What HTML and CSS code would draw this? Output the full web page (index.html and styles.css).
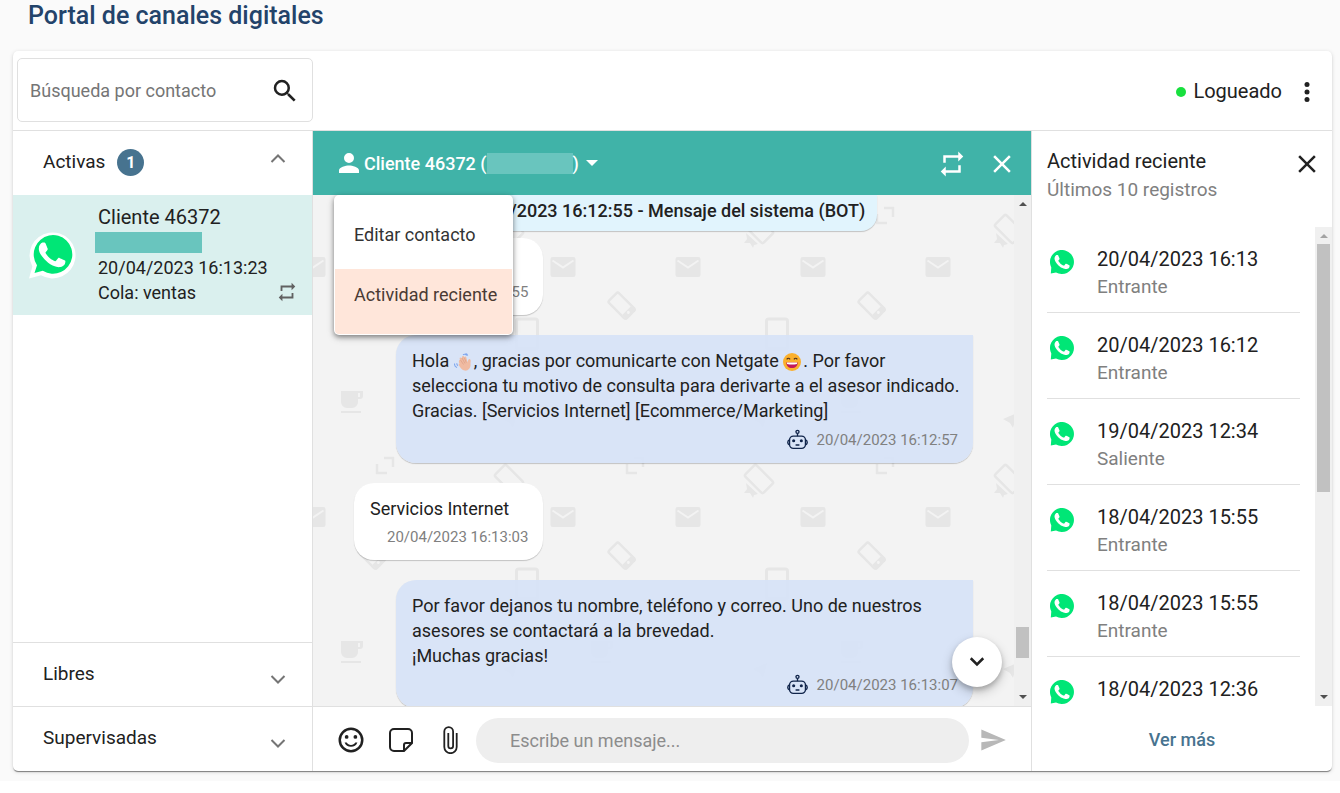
FILE: index.html
```html
<!DOCTYPE html>
<html lang="es">
<head>
<meta charset="utf-8">
<title>Portal de canales digitales</title>
<link rel="stylesheet" href="styles.css">
</head>
<body>
<svg class="defs" width="0" height="0" aria-hidden="true">
  <defs>
    <symbol id="i-search" viewBox="0 0 24 24"><path d="M15.5 14h-.79l-.28-.27A6.47 6.47 0 0 0 16 9.5 6.5 6.5 0 1 0 9.5 16c1.61 0 3.09-.59 4.23-1.57l.27.28v.79l5 4.99L20.49 19zm-6 0a4.5 4.5 0 1 1 0-9 4.5 4.5 0 0 1 0 9z"/></symbol>
    <symbol id="i-dots" viewBox="0 0 24 24"><circle cx="12" cy="6" r="2"/><circle cx="12" cy="12" r="2"/><circle cx="12" cy="18" r="2"/></symbol>
    <symbol id="i-close" viewBox="0 0 24 24"><path d="M19 6.41 17.59 5 12 10.59 6.41 5 5 6.41 10.59 12 5 17.59 6.41 19 12 13.41 17.59 19 19 17.59 13.41 12z"/></symbol>
    <symbol id="i-repeat" viewBox="0 0 24 24"><path d="M7 7h10v3l4-4-4-4v3H5v6h2zm10 10H7v-3l-4 4 4 4v-3h12v-6h-2z"/></symbol>
    <symbol id="i-person" viewBox="0 0 24 24"><path d="M12 12a4 4 0 1 0 0-8 4 4 0 0 0 0 8zm0 2c-2.67 0-8 1.34-8 4v2h16v-2c0-2.66-5.33-4-8-4z"/></symbol>
    <symbol id="i-down" viewBox="0 0 24 24"><path d="m7 9 5 5 5-5" fill="none" stroke="currentColor" stroke-width="2"/></symbol>
    <symbol id="i-down-thin" viewBox="0 0 26 26"><path d="m6.500 10 6.500 6.500 6.500-6.500" fill="none" stroke="currentColor" stroke-width="2"/></symbol>
    <symbol id="i-smile" viewBox="0 0 24 24"><circle cx="12" cy="12" r="9" fill="none" stroke="currentColor" stroke-width="2"/><circle cx="8.5" cy="9.5" r="1.5"/><circle cx="15.5" cy="9.5" r="1.5"/><path d="M12 16c-1.48 0-2.75-.81-3.450-2H6.880a5.500 5.500 0 0 0 10.240 0h-1.670c-.69 1.190-1.970 2-3.450 2z"/></symbol>
    <symbol id="i-sticker" viewBox="0 0 24 24"><path d="M5 1h14a4 4 0 0 1 4 4v10l-8 8H5a4 4 0 0 1-4-4V5a4 4 0 0 1 4-4zM15 22.500V17a2 2 0 0 1 2-2h5.500" fill="none" stroke="currentColor" stroke-width="2"/></symbol>
    <symbol id="i-clip" viewBox="0 0 16 28"><path d="M14.200 7v14a6.200 6.200 0 0 1-12.400 0V5.500a4.300 4.300 0 0 1 8.800 0v14.500a2.400 2.400 0 0 1-4.800 0V7" fill="none" stroke="currentColor" stroke-width="1.800"/></symbol>
    <symbol id="i-send" viewBox="0 0 24 24"><path d="M2.010 21 23 12 2.010 3 2 10l15 2-15 2z"/></symbol>
    <symbol id="i-handset" viewBox="0 0 24 24"><path d="M17.472 14.382c-.297-.149-1.758-.867-2.030-.967-.273-.099-.471-.148-.67.15-.197.297-.767.966-.94 1.164-.173.199-.347.223-.644.075-.297-.15-1.255-.463-2.390-1.475-.883-.788-1.480-1.761-1.653-2.059-.173-.297-.018-.458.13-.606.134-.133.298-.347.446-.52.149-.174.198-.298.298-.497.099-.198.05-.371-.025-.52-.075-.149-.669-1.612-.916-2.207-.242-.579-.487-.5-.669-.51-.173-.008-.371-.01-.57-.01-.198 0-.52.074-.792.372-.272.297-1.040 1.016-1.040 2.479 0 1.462 1.065 2.875 1.213 3.074.149.198 2.096 3.200 5.077 4.487.709.306 1.262.489 1.694.625.712.227 1.360.195 1.871.118.571-.085 1.758-.719 2.006-1.413.248-.694.248-1.289.173-1.413-.074-.124-.272-.198-.57-.347z"/></symbol>
    <symbol id="i-wa-ring" viewBox="0 0 48 48">
      <path d="M0 47.500 3.400 35.500A23 23 0 1 1 12 44.300z" fill="#fff"/>
      <path d="M5.500 42 8 34.200A19.300 19.300 0 1 1 13.800 39.800z" fill="#00e676"/>
      <g transform="translate(-3.400 -2.600) scale(2.200)"><use href="#i-handset" width="24" height="24" fill="#fff"/></g>
    </symbol>
    <symbol id="i-wa" viewBox="0 0 24 24">
      <path d="M.8 23.500 1.300 17.500A12 12 0 1 1 6 22.400z" fill="#00e676"/>
      <g transform="translate(-3 -3) scale(1.250)"><use href="#i-handset" width="24" height="24" fill="#fff"/></g>
    </symbol>
    <symbol id="i-robot" viewBox="0 0 24 21">
      <g fill="none" stroke="#10244a" stroke-width="1.400"><circle cx="12" cy="2.500" r="1.600"/><path d="M12 4.200V7"/><rect x="3.700" y="7" width="16.600" height="12.800" rx="4"/><path d="M3.500 11A2.700 2.700 0 0 0 3.500 16M20.500 11a2.700 2.700 0 0 1 0 5M10 16.200h4"/></g>
      <circle cx="8" cy="11.800" r="1.600" fill="#10244a"/><circle cx="16" cy="11.800" r="1.600" fill="#10244a"/>
    </symbol>
    <symbol id="e-wave" viewBox="0 0 18 18">
      <path d="M6 6.500C5 4.500 6.500 3.800 7.300 5.300L8 4.200C8.200 2.500 10 2.700 10.200 4.200 11 3 12.300 3.500 12.400 5L13.600 9.500C13.900 7.300 14.800 5.500 16 6.300 17.300 7.200 16.300 9 16.500 11.500 16.700 15.200 14 18 10.800 17.600 8 17.200 6.500 15 5 12.600 4.200 11.200 5 10.500 5.800 11 4.200 8.600 4.800 7.300 6 6.500z" fill="#f0bba2"/>
      <path d="m6.500 7 3 4.500M8 5l3 5.500M10.300 4.700l2 5" stroke="#db9f86" stroke-width=".7" fill="none"/>
      <path d="M9 1.800q2-1.500 3.600.7M11.500.6q1.800.2 2.200 2M.5 10.500q-.2 3 2.500 4M2.800 10.200q-.1 1.700 1.200 2.500" stroke="#7fa6ee" stroke-width="1.100" fill="none"/>
    </symbol>
    <symbol id="e-laugh" viewBox="0 0 18 18">
      <circle cx="9" cy="9" r="9" fill="#fbb02d"/>
      <path d="M3.300 9.400h11.400c0 3.400-2.200 5.600-5.700 5.600s-5.700-2.200-5.700-5.600z" fill="#c2185b"/><path d="M4 9.400h10v1.500q-5 1-10 0z" fill="#fff"/>
      <path d="M3.700 6.400q1.700-2.300 3.400 0M10.900 6.400q1.700-2.300 3.400 0" fill="none" stroke="#4a3020" stroke-width="1.200"/>
    </symbol>
    <pattern id="wallpaper" patternUnits="userSpaceOnUse" width="250" height="250">
      <g fill="#e6e6e6">
        <rect x="112.500" y="62" width="25" height="20" rx="2"/>
        <rect x="237.500" y="62" width="25" height="20" rx="2"/>
        <rect x="-12.500" y="62" width="25" height="20" rx="2"/>
        <path d="M28 196h22v5a3 3 0 0 1-3 3h-2v3a6 6 0 0 1-6 6h-5a6 6 0 0 1-6-6zM45 198v4h2v-4zM28 216h20v2H28z" fill-rule="evenodd"/>
      </g>
      <path d="m114.500 65.500 10.500 7 10.500-7M239.500 65.500l10.500 7 10.500-7M-10.500 65.500l10.500 7 10.500-7" fill="none" stroke="#f3f3f3" stroke-width="2"/>
      <g fill="none" stroke="#e6e6e6">
        <g transform="rotate(-45 59 111)"><rect x="52" y="98" width="14" height="25" rx="2" stroke-width="2.500"/><path d="M52 120.500h14" stroke-width="6"/><circle cx="59" cy="120" r="1.500" fill="#f3f3f3" stroke="none"/></g>
        <rect x="203.500" y="124" width="21" height="30" rx="2" stroke-width="3"/>
        <path d="M71 13h9v9M64 19v9h10" stroke-width="2.500"/>
        <g transform="rotate(-45 196 34)"><rect x="188" y="21" width="16" height="26" rx="2" stroke-width="2.500"/></g>
      </g>
      <path d="m183 38 12 11-4 1-1 3-3-5-6 0 3-4zM190 224l14-6-4 15-3-5z" fill="#e6e6e6"/>
    </pattern>
  </defs>
</svg>

<main class="page">
  <h1 class="page-title">Portal de canales digitales</h1>
  <section class="portal">
    <header class="topbar">
      <form class="search">
        <input class="search-input" type="search" placeholder="Búsqueda por contacto" aria-label="Búsqueda por contacto">
        <button class="icon-button" type="button" aria-label="Buscar"><svg class="icon"><use href="#i-search"/></svg></button>
      </form>
      <div class="session">
        <span class="status-dot"></span>
        <span class="status-text">Logueado</span>
        <button class="icon-button" type="button" aria-label="Opciones"><svg class="icon"><use href="#i-dots"/></svg></button>
      </div>
    </header>

    <div class="columns">
      <aside class="queues">
        <button class="group" type="button" aria-expanded="true">
          <span>Activas</span><span class="badge">1</span>
          <svg class="chevron chevron-up"><use href="#i-down-thin"/></svg>
        </button>
        <article class="contact">
          <svg class="contact-logo"><use href="#i-wa-ring"/></svg>
          <div class="contact-info">
            <div class="contact-name">Cliente 46372</div>
            <div class="mask contact-mask"></div>
            <div>20/04/2023 16:13:23</div>
            <div>Cola: ventas</div>
          </div>
          <svg class="contact-transfer"><use href="#i-repeat"/></svg>
        </article>
        <div class="spacer"></div>
        <button class="group group-closed" type="button" aria-expanded="false"><span>Libres</span><svg class="chevron chevron-down"><use href="#i-down-thin"/></svg></button>
        <button class="group group-closed" type="button" aria-expanded="false"><span>Supervisadas</span><svg class="chevron chevron-down"><use href="#i-down-thin"/></svg></button>
      </aside>

      <section class="chat">
        <header class="chat-header">
          <button class="client" type="button" aria-haspopup="menu" aria-expanded="true">
            <svg class="icon"><use href="#i-person"/></svg>
            <span>Cliente 46372 (</span><span class="mask client-mask"></span><span>)</span>
            <span class="caret"></span>
          </button>
          <div class="chat-tools">
            <button class="icon-button" type="button" aria-label="Transferir"><svg class="icon"><use href="#i-repeat"/></svg></button>
            <button class="icon-button" type="button" aria-label="Cerrar"><svg class="icon"><use href="#i-close"/></svg></button>
          </div>
          <div class="menu" role="menu">
            <button class="menu-item" type="button" role="menuitem">Editar contacto</button>
            <button class="menu-item menu-item-active" type="button" role="menuitem">Actividad reciente</button>
          </div>
        </header>

        <div class="chat-body">
          <div class="thread">
            <svg class="wallpaper" aria-hidden="true"><rect width="100%" height="100%" fill="url(#wallpaper)"/></svg>
            <p class="system">20/04/2023 16:12:55 - Mensaje del sistema (BOT)</p>
            <div class="messages">
              <div class="bubble bubble-in"><p>Hola</p><div class="stamp"><time>20/04/2023 16:12:55</time></div></div>
              <div class="bubble bubble-out">
                <p>Hola <svg class="emoji"><use href="#e-wave"/></svg>, gracias por comunicarte con Netgate <svg class="emoji"><use href="#e-laugh"/></svg>. Por favor selecciona tu motivo de consulta para derivarte a el asesor indicado. Gracias. [Servicios Internet] [Ecommerce/Marketing]</p>
                <div class="stamp"><svg class="robot"><use href="#i-robot"/></svg><time>20/04/2023 16:12:57</time></div>
              </div>
              <div class="bubble bubble-in"><p>Servicios Internet</p><div class="stamp"><time>20/04/2023 16:13:03</time></div></div>
              <div class="bubble bubble-out">
                <p>Por favor dejanos tu nombre, teléfono y correo. Uno de nuestros asesores se contactará a la brevedad.<br>¡Muchas gracias!</p>
                <div class="stamp"><svg class="robot"><use href="#i-robot"/></svg><time>20/04/2023 16:13:07</time></div>
              </div>
            </div>
            <button class="to-bottom" type="button" aria-label="Ir al final"><svg class="to-bottom-icon"><use href="#i-down"/></svg></button>
          </div>
          <div class="scrollbar"><span class="arrow arrow-up"></span><span class="thumb thumb-short"></span><span class="arrow arrow-down"></span></div>
        </div>

        <form class="composer">
          <button class="icon-button" type="button" aria-label="Emojis"><svg class="icon"><use href="#i-smile"/></svg></button>
          <button class="icon-button" type="button" aria-label="Stickers"><svg class="icon-sticker"><use href="#i-sticker"/></svg></button>
          <button class="icon-button" type="button" aria-label="Adjuntar"><svg class="icon-clip"><use href="#i-clip"/></svg></button>
          <input class="composer-input" type="text" placeholder="Escribe un mensaje..." aria-label="Escribe un mensaje">
          <button class="icon-button send" type="button" aria-label="Enviar"><svg class="icon-send"><use href="#i-send"/></svg></button>
        </form>
      </section>

      <aside class="activity">
        <header class="activity-header">
          <div>
            <h2 class="activity-title">Actividad reciente</h2>
            <p class="activity-subtitle">Últimos 10 registros</p>
          </div>
          <button class="icon-button" type="button" aria-label="Cerrar actividad"><svg class="icon"><use href="#i-close"/></svg></button>
        </header>
        <div class="activity-body">
          <ul class="records">
            <li class="record"><svg class="record-logo"><use href="#i-wa"/></svg><div><div class="record-date">20/04/2023 16:13</div><div class="record-kind">Entrante</div></div></li>
            <li class="record"><svg class="record-logo"><use href="#i-wa"/></svg><div><div class="record-date">20/04/2023 16:12</div><div class="record-kind">Entrante</div></div></li>
            <li class="record"><svg class="record-logo"><use href="#i-wa"/></svg><div><div class="record-date">19/04/2023 12:34</div><div class="record-kind">Saliente</div></div></li>
            <li class="record"><svg class="record-logo"><use href="#i-wa"/></svg><div><div class="record-date">18/04/2023 15:55</div><div class="record-kind">Entrante</div></div></li>
            <li class="record"><svg class="record-logo"><use href="#i-wa"/></svg><div><div class="record-date">18/04/2023 15:55</div><div class="record-kind">Entrante</div></div></li>
            <li class="record"><svg class="record-logo"><use href="#i-wa"/></svg><div><div class="record-date">18/04/2023 12:36</div></div></li>
          </ul>
          <div class="scrollbar"><span class="arrow arrow-up arrow-off"></span><span class="thumb thumb-long"></span><span class="arrow arrow-down"></span></div>
        </div>
        <footer class="activity-footer"><a class="more" href="#">Ver más</a></footer>
      </aside>
    </div>
  </section>
</main>
</body>
</html>
```

FILE: styles.css
```css
* { box-sizing: border-box; }

body {
  margin: 0;
  background: #fff;
  color: #212121;
  font: 18px/25px Roboto, "Liberation Sans", sans-serif;
}

h1, h2, p, ul { margin: 0; padding: 0; }

button {
  margin: 0;
  padding: 0;
  border: 0;
  background: none;
  color: inherit;
  font: inherit;
  cursor: pointer;
}

input { font: inherit; color: inherit; outline: 0; }

svg { display: block; fill: currentColor; }

.defs { position: absolute; }

.page {
  display: flex;
  flex-direction: column;
  min-height: calc(100vh - 12px);
  padding: 0 8px 10px 13px;
  background: #fafafa;
}

.page-title {
  padding: 0 15px 20px;
  color: #23436a;
  font-size: 25px;
  font-weight: 500;
  line-height: 31px;
}

.portal {
  display: flex;
  flex: 1;
  flex-direction: column;
  border-radius: 5px;
  background: #fff;
  box-shadow: 0 2px 1px -1px rgba(0, 0, 0, .3), 0 1px 1px rgba(0, 0, 0, .2), 0 1px 4px rgba(0, 0, 0, .14);
}

.icon { width: 30px; height: 30px; }

.icon-button {
  display: flex;
  align-items: center;
  justify-content: center;
}

/* Top bar */

.topbar {
  display: flex;
  align-items: center;
  justify-content: space-between;
  height: 80px;
  padding: 0 10px 2px 4px;
  border-bottom: 1px solid #e0e0e0;
}

.search {
  display: flex;
  align-items: center;
  width: 296px;
  height: 64px;
  padding: 2px 12px 0 12px;
  border: 1px solid #e0e0e0;
  border-radius: 5px;
}

.search-input {
  flex: 1;
  min-width: 0;
  padding: 0;
  border: 0;
  background: none;
}

.search-input::placeholder { color: #757575; opacity: 1; }

.session { display: flex; align-items: center; padding-top: 4px; font-size: 20px; }

.status-dot {
  width: 10px;
  height: 10px;
  margin-right: 7px;
  border-radius: 50%;
  background: #18e03e;
}

.status-text { margin-right: 10px; }

.columns {
  display: grid;
  flex: 1;
  grid-template-columns: 300px minmax(0, 1fr) 301px;
  min-height: 0;
}

/* Queues */

.queues {
  display: flex;
  flex-direction: column;
  border-right: 1px solid #e0e0e0;
}

.group {
  display: flex;
  align-items: center;
  height: 64px;
  padding: 0 21px 3px 30px;
  font-size: 19px;
  text-align: left;
}

.group-closed { border-top: 1px solid #e0e0e0; }

.group-closed:last-child { height: 65px; padding-bottom: 4px; }

.badge {
  width: 27px;
  height: 27px;
  margin: 2px 0 0 12px;
  border-radius: 50%;
  background: #47738f;
  color: #fff;
  font-size: 16px;
  font-weight: 700;
  line-height: 27px;
  text-align: center;
}

.chevron {
  width: 26px;
  height: 26px;
  margin-left: auto;
  color: #757575;
}

.chevron-up { margin-bottom: 5px; transform: rotate(180deg); }
.chevron-down { margin-top: 12px; }

.contact {
  display: flex;
  align-items: center;
  height: 120px;
  padding: 0 14px 0 16px;
  background: #daf0ee;
}

.contact-logo { width: 48px; height: 48px; }

.contact-info { flex: 1; padding-left: 21px; }

.contact-name { font-size: 20px; }

.mask { background: #69c5be; }

.contact-mask { width: 107px; height: 21px; margin: 2px 0 2px -3px; }

.contact-transfer {
  align-self: flex-end;
  width: 22px;
  height: 22px;
  margin-bottom: 12px;
  color: #616161;
}

.spacer { flex: 1; }

/* Chat */

.chat { display: flex; flex-direction: column; min-height: 0; }

.chat-header {
  position: relative;
  z-index: 2;
  display: flex;
  align-items: center;
  justify-content: space-between;
  height: 64px;
  padding: 0 14px 0 21px;
  background: #40b3a8;
  color: #fff;
}

.client { display: flex; align-items: center; font-weight: 500; }

.client-mask { width: 86px; height: 21px; }

.caret {
  margin-left: 7px;
  border: 6px solid transparent;
  border-top-color: #fff;
  border-bottom: 0;
}

.chat-tools { display: flex; gap: 20px; padding-top: 2px; }

.menu {
  position: absolute;
  top: 100%;
  left: 21px;
  display: flex;
  flex-direction: column;
  min-width: 179px;
  padding: 1px;
  border-radius: 5px;
  background: #fff;
  box-shadow: 0 2px 5px rgba(0, 0, 0, .4), 0 3px 8px rgba(0, 0, 0, .14);
  color: #333;
}

.menu-item {
  padding: 26px 14px 22px 19px;
  border-radius: 4px 4px 0 0;
  text-align: left;
  white-space: nowrap;
}

.menu-item-active {
  padding: 13px 14px 27px 19px;
  border-radius: 0 0 4px 4px;
  background: #ffe6da;
  color: #4a3a34;
}

.chat-body { display: flex; flex: 1 1 0; min-height: 0; background: #f3f3f3; }

.thread { position: relative; flex: 1; min-width: 0; overflow: hidden; }

.wallpaper { position: absolute; inset: 0; width: 100%; height: 100%; }

.system {
  position: relative;
  width: fit-content;
  margin: 0 auto 7px;
  padding: 3px 12px 8px;
  border-radius: 0 0 16px 16px;
  background: #e1f4fd;
  box-shadow: 0 1px 1px rgba(0, 0, 0, .2);
  font-weight: 500;
}

.messages {
  position: relative;
  display: flex;
  flex-direction: column;
  gap: 20px;
  padding: 0 41px;
}

.bubble {
  padding: 13px 12px 11px 16px;
  border-radius: 20px;
  box-shadow: 0 1px 1px rgba(0, 0, 0, .2);
}

.bubble-in { align-self: flex-start; background: #fff; }

.bubble-out {
  margin-left: 42px;
  border-top-right-radius: 0;
  background: rgba(215, 227, 247, .95);
}

.stamp {
  display: flex;
  align-items: center;
  justify-content: flex-end;
  gap: 8px;
  margin-top: 4px;
  padding: 0 3px 0 17px;
  color: #808080;
  font-size: 15px;
  line-height: 24px;
}

.robot { width: 23px; height: 25px; }

.emoji { display: inline-block; width: 18px; height: 18px; margin-right: 2px; vertical-align: -4px; }

.to-bottom {
  position: absolute;
  right: 12px;
  bottom: 19px;
  display: flex;
  align-items: center;
  justify-content: center;
  width: 50px;
  height: 50px;
  border-radius: 50%;
  background: #fff;
  box-shadow: 0 3px 5px rgba(0, 0, 0, .2), 0 5px 12px rgba(0, 0, 0, .2);
}

.to-bottom-icon { width: 30px; height: 30px; }

.composer {
  display: flex;
  align-items: center;
  height: 65px;
  padding: 2px 24px 0 23px;
  border-top: 1px solid #e0e0e0;
}

.icon-sticker { width: 24px; height: 24px; margin: 0 29px 0 23px; }

.icon-clip { width: 17px; height: 28px; margin-right: 17px; }

.icon-send { width: 28px; height: 28px; }

.composer-input {
  flex: 1;
  min-width: 0;
  height: 45px;
  padding: 0 34px;
  border: 0;
  border-radius: 23px;
  background: #eee;
}

.composer-input::placeholder { color: #8c8c8c; opacity: 1; }

.send { margin-left: 10px; color: #b8b8b8; }

/* Scroll bars */

.scrollbar {
  display: flex;
  flex-direction: column;
  align-items: center;
  justify-content: space-between;
  width: 17px;
  padding: 7px 0;
  background: #f0f0f0;
}

.arrow { border: 4px solid transparent; }
.arrow-up { border-top: 0; border-bottom-color: #505050; }
.arrow-down { border-bottom: 0; border-top-color: #505050; }
.arrow-off { border-bottom-color: #a3a3a3; }

.thumb { width: 13px; background: #c1c1c1; }
.thumb-short { height: 31px; margin: auto 0 37px; }
.thumb-long { height: 248px; margin: 6px 0 auto; }

/* Recent activity */

.activity {
  display: flex;
  flex-direction: column;
  min-height: 0;
  border-left: 1px solid #e0e0e0;
}

.activity-header {
  display: flex;
  align-items: flex-start;
  justify-content: space-between;
  height: 96px;
  padding: 18px 10px 0 15px;
}

.activity-title { font-size: 20px; font-weight: 400; }

.activity-subtitle { padding-top: 3px; color: #808080; font-size: 19px; }

.activity-body { display: flex; flex: 1 1 0; min-height: 0; overflow: hidden; }

.records { flex: 1; padding: 0 15px; list-style: none; }

.record {
  display: flex;
  gap: 23px;
  height: 86px;
  padding: 20px 0 0 3px;
  border-bottom: 1px solid #e0e0e0;
}

.record-logo { width: 24px; height: 24px; margin-top: 3px; }

.record-date { font-size: 20px; }

.record-kind { padding-top: 2px; color: #808080; font-size: 19px; }

.activity-footer { display: flex; align-items: center; justify-content: center; height: 65px; padding-top: 2px; }

.more { color: #47738f; font-weight: 500; text-decoration: none; }
```
